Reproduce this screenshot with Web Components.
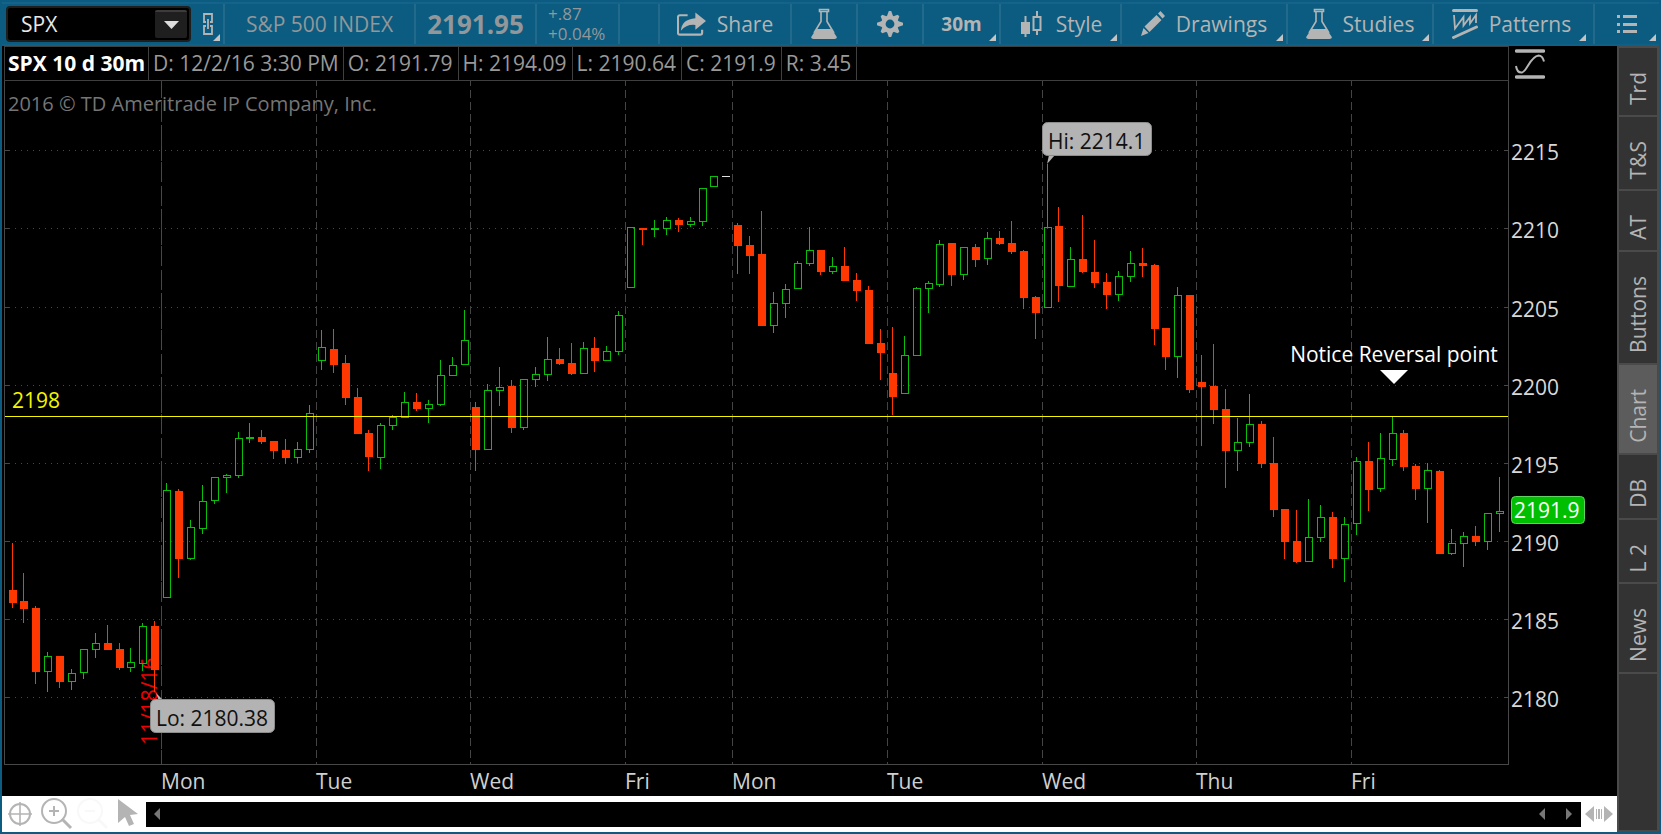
<!DOCTYPE html>
<html lang="en">
<head>
<meta charset="utf-8">
<title>SPX Chart</title>
<style>
  html, body { margin: 0; height: 100%; background: #0b5c80; }
  body { font: 21px/28px "Open Sans", "Noto Sans", sans-serif; color: #b4b4b4; }
</style>
</head>
<body>
<trade-window></trade-window>

<script>
const make = (name, html, setup) => {
  const tpl = document.createElement('template');
  tpl.innerHTML = html;
  customElements.define(name, class extends HTMLElement {
    constructor() {
      super();
      this.attachShadow({ mode: 'open' }).append(tpl.content.cloneNode(true));
    }
    connectedCallback() { if (setup) setup(this, this.shadowRoot); }
  });
};

/* ---------- icons ---------- */
const flask = `<svg width="26" height="32" viewBox="0 0 26 32"><path d="M8.5 1.5h9v2h-9zM10 3.5v10L3 25M16 3.500v10L23 25" fill="none" stroke="#b4b4b4" stroke-width="1.6"/><path d="M5.500 21h15l5 7.500q1 2.500-2 2.500h-21q-3 0-2-2.500z" fill="#b4b4b4"/></svg>`;
const ICONS = {
  flask,
  share: `<svg width="29" height="26" viewBox="0 0 30 26"><path d="M11 4H3q-2 0-2 2v16q0 2 2 2h21q2 0 2-2v-3" fill="none" stroke="#b4b4b4" stroke-width="2.2"/><path d="M19 1l11 9-11 9v-5q-9-1-15 6 1-12 15-13z" fill="#b4b4b4"/></svg>`,
  gear: `<svg width="28" height="28" viewBox="-14 -14 28 28"><g fill="#b4b4b4"><g><path d="M-3-8L-1.200-13h2.400L3-8zM-3 8L-1.200 13h2.400L3 8z"/><path d="M-8-3L-13-1.200v2.400L-8 3zM8-3L13-1.200v2.400L8 3z"/></g><g transform="rotate(45)"><path d="M-3-8L-1.200-12h2.400L3-8zM-3 8L-1.200 12h2.400L3 8z"/><path d="M-8-3L-12-1.200v2.400L-8 3zM8-3L12-1.200v2.400L8 3z"/></g></g><circle r="6.600" fill="none" stroke="#b4b4b4" stroke-width="4.400"/></svg>`,
  candles: `<svg width="26" height="28" viewBox="-1 0 26 28"><path d="M1 12h9v12H1zM4.500 6h2v21h-2z" fill="#b4b4b4"/><path d="M13.500 7h7v13h-7zM17 1v6M17 20v5" fill="none" stroke="#b4b4b4" stroke-width="2"/></svg>`,
  pencil: `<svg width="24" height="26" viewBox="0 0 24 26"><path d="M0 25l2.500-8 5 5zM3.500 15.500L15.500 4l5 5L8.500 21zM17 2.500L19.500 0 24 5l-2.500 2.500z" fill="#b4b4b4"/></svg>`,
  patterns: `<svg width="26" height="32" viewBox="0 0 26 32"><path d="M1.500 2.500h23M1.500 29.500l23-10.500" stroke="#b4b4b4" stroke-width="3" stroke-linecap="round"/><path d="M2 7l1 13.500L11.500 9v8.500L18 9v6.500L24 7v8" fill="none" stroke="#b4b4b4" stroke-width="1.800"/></svg>`,
  list: `<svg width="20" height="20" viewBox="0 0 20 20"><path d="M0 1h3v3H0zM0 9h3v3H0zM0 16h3v3H0zM6 1h14v3H6zM6 9h14v3H6zM6 16h14v3H6z" fill="#b4b4b4"/></svg>`
};

/* ---------- one toolbar cell ---------- */
make('tool-item', `
<style>
  :host { display: flex; box-sizing: border-box; border-left: 2px solid #226a8b; position: relative; flex: none; }
  button { flex: 1; display: flex; align-items: center; justify-content: center; gap: 11px; border: 0; padding: 0;
    background: none; color: inherit; font: inherit; white-space: nowrap; }
  svg { display: block; flex: none; }
  .corner { position: absolute; right: 3px; bottom: 3px; display: none; }
  :host([menu]) .corner { display: block; }
</style>
<button type="button"><span class="icon"></span><slot></slot></button>
<svg class="corner" width="7" height="7" aria-hidden="true"><path d="M7 0v7H0z" fill="#c4c4c4"/></svg>`,
(host, root) => {
  const box = root.querySelector('.icon'), name = host.getAttribute('icon');
  if (name) box.innerHTML = ICONS[name]; else box.remove();
  const label = host.getAttribute('label');
  if (label) root.querySelector('button').setAttribute('aria-label', label);
});

make('tool-bar', `
<style>
  :host { display: flex; height: 40px; border-top: 2px solid #13638a; border-bottom: 2px solid #0f6086; margin-top: 2px; }
  .symbol { display: flex; align-items: center; width: 221px; box-sizing: border-box; padding-left: 4px; position: relative; flex: none; }
  .combo { display: flex; align-items: center; width: 185px; height: 36px; box-sizing: border-box; border: 2px solid #1e1e1e; border-radius: 4px; background: #000; }
  input { flex: 1; min-width: 0; border: 0; padding: 0 0 0 13px; background: none; color: #e8e8e8; font: inherit; outline: 0; }
  .drop { width: 32px; height: 28px; margin-right: 2px; border: 0; border-top: 2px solid #3c3c3c; border-radius: 2px; padding: 0; background: #1f1f1f; display: grid; place-items: center; }
  .link { border: 0; padding: 0; margin-left: 12px; background: none; display: flex; }
  .corner { position: absolute; right: 3px; bottom: 3px; }
  .info { display: flex; align-items: center; justify-content: center; box-sizing: border-box; border-left: 2px solid #226a8b; color: #939799; flex: none; white-space: nowrap; }
  .last { font-weight: 700; font-size: 26px; }
  .chg { font-size: 17px; line-height: 20px; flex-direction: column; align-items: flex-start; padding-left: 11px; }
  .gap { flex: 1; border-left: 2px solid #226a8b; }
  .tf { font-weight: 700; font-size: 19px; }
</style>
<div class="symbol">
  <div class="combo"><input aria-label="Symbol" value="SPX"><button class="drop" type="button" aria-label="Choose symbol"><svg width="15" height="8"><path d="M0 0h15L7.500 8z" fill="#ddd"/></svg></button></div>
  <button class="link" type="button" aria-label="Link symbol"><svg width="10" height="22" viewBox="0 0 10 22" fill="none" stroke="#b4b4b4" stroke-width="1.800"><path d="M3 9H1V1h8v8H7M3 13H1v8h8v-8H7M5 6v10" /></svg></button>
  <svg class="corner" width="7" height="7"><path d="M7 0v7H0z" fill="#c4c4c4"/></svg>
</div>
<div class="info" style="width:191px">S&amp;P 500 INDEX</div>
<div class="info last" style="width:121px">2191.95</div>
<div class="info chg" style="width:83px"><div>+.87</div><div>+0.04%</div></div>
<div class="gap"></div>
<tool-item icon="share" style="width:132px">Share</tool-item>
<tool-item icon="flask" label="Lab" style="width:66px"></tool-item>
<tool-item icon="gear" label="Settings" style="width:66px"></tool-item>
<tool-item class="tf" menu style="width:77px">30m</tool-item>
<tool-item icon="candles" menu style="width:121px">Style</tool-item>
<tool-item icon="pencil" menu style="width:166px">Drawings</tool-item>
<tool-item icon="flask" menu style="width:146px">Studies</tool-item>
<tool-item icon="patterns" menu style="width:157px;margin-right:4px">Patterns</tool-item>
<tool-item icon="list" label="Menu" menu style="width:66px"></tool-item>`);

/* ---------- bar readout above the plot ---------- */
make('chart-readout', `
<style>
  :host { display: flex; height: 35px; }
  .strip { flex: 1; display: flex; margin-left: 2px; border: 1px solid #3f3f3f; white-space: nowrap; color: #999; overflow: hidden; }
  .strip > div { border-right: 1px solid #3f3f3f; padding: 0 5px 0 4px; line-height: 33px; }
  .strip > .name { padding: 0 3px; color: #fff; font-weight: 700; }
  .strip > .date { padding: 0 4px; }
  .side { width: 108px; flex: none; }
  button { border: 0; padding: 3px 0 0 6px; background: none; display: block; }
  svg { display: block; }
</style>
<div class="strip"><div class="name">SPX 10 d 30m</div><div class="date">D: 12/2/16 3:30 PM</div><div>O: 2191.79</div><div>H: 2194.09</div><div>L: 2190.64</div><div>C: 2191.9</div><div>R: 3.45</div></div>
<div class="side"><button type="button" aria-label="Price scale"><svg width="30" height="30" viewBox="0 0 30 30"><path d="M1.500 2h27M1.500 28h27" stroke="#b4b4b4" stroke-width="3.400" stroke-linecap="round"/><path d="M1 17q1 7 6 6.500c5-1 8-16 16.500-17q4 0 5.500 6" fill="none" stroke="#b4b4b4" stroke-width="2"/></svg></button></div>`);

/* ---------- candles: x, direction, high, body top, body bottom, low ---------- */
const CANDLES = `
9r543,590,603,608 20r573,601,609,623 32r606,608,672,684 44g652,656,672,692 56r656,656,682,688 68g669,673,682,690
80g649,649,673,679 92g633,643,650,658 104r625,643,650,650 116r643,649,668,670 127g648,662,668,672 139g623,626,664,671 151r621,626,670,692
163g483,490,598,598 175r489,491,559,578 187g520,527,559,560 199g485,501,529,534 211g477,477,501,504 223g474,475,478,493
235g432,438,476,478 246g423,437,439,443 258r430,437,442,444 270r441,441,451,459 282r439,450,458,464 294g442,449,458,463 306g405,413,450,453
318g330,347,361,370 330r329,349,365,373 342r355,363,398,405 354r388,397,434,434 365r430,433,457,471 377g423,425,458,469
389g415,417,426,430 401g392,402,418,418 413r393,402,409,411 425g400,404,409,423 437g360,375,405,406 449g357,365,376,376 461g310,340,365,365
472r402,407,450,471 484g384,390,450,450 496g367,387,391,406 508r380,386,428,433 520g379,379,428,430 532g367,374,380,387
544g337,359,375,381 556r348,359,364,365 568r343,363,374,375 580g342,348,374,374 591r337,348,361,372 603g346,351,361,361 615g311,315,352,355
627g227,227,288,288 639r228,228,230,245 651g220,228,230,237 663g217,220,229,235 675r218,220,225,232 687g217,221,225,227
699g188,188,222,226 710g176,176,187,187 722w176,176,177,177
734r223,225,246,274 746r236,245,256,274 758r211,254,326,326 770g292,303,326,333 782g284,289,304,318 794g261,263,289,289
806g227,250,264,266 817r250,250,272,275 829g257,266,272,274 841r247,266,281,281 853r273,280,291,301 865r286,290,344,344 877r329,343,353,380
889r327,373,397,415 901g336,355,394,394 913g287,288,356,356 925g281,283,289,313 936g240,244,285,287 948r243,243,275,286
960g247,247,275,280 972r244,247,260,267 984g232,238,259,265 996r231,238,244,245 1008r221,243,252,254 1020r250,251,298,309 1032r296,297,313,339
1044g164,227,308,308 1055r207,226,286,302 1067g247,259,287,287 1079r215,259,272,273 1091r240,272,283,288 1103r273,282,295,309
1115g271,276,295,301 1127g251,263,277,282 1139r248,263,266,277 1151r264,265,329,345 1162r328,328,357,370 1174g287,295,357,378 1186r295,295,390,393
1198r355,382,387,446 1210r344,386,410,424 1222r389,409,451,488 1234g418,442,451,471 1246g394,424,443,447 1258r421,424,464,468
1270r437,463,510,517 1281r509,509,542,559 1293r510,541,562,563 1305g499,537,562,562 1317g505,517,538,542 1329r512,517,559,568 1341g517,524,559,582
1353g457,461,524,535 1365r442,461,490,511 1377g433,458,489,492 1389g417,433,460,466 1400r430,433,467,471 1412r464,466,489,500
1424g463,470,489,523 1436r470,471,554,554 1448g529,543,554,555 1460g532,536,544,567 1472r526,536,542,546 1484g513,513,542,550 1496g477,511,514,532`
  .trim().split(/\s+/).map(s => { const m = s.match(/^(\d+)([rgw])(.+)$/); return [+m[1], m[2], ...m[3].split(',').map(Number)]; });
const LEVELS = [[150, 2215], [228, 2210], [307, 2205], [385, 2200], [463, 2195], [541, 2190], [619, 2185], [697, 2180]];
const DAYS = [[161, 'Mon'], [316, 'Tue'], [470, 'Wed'], [625, 'Fri'], [732, 'Mon'], [887, 'Tue'], [1042, 'Wed'], [1196, 'Thu'], [1351, 'Fri']];
const COLOR = { r: '#ff3700', g: '#0abf0a', w: '#e0e0e0' };

make('price-chart', `
<style>
  :host { display: block; position: relative; min-height: 0; overflow: hidden; }
  svg { display: block; width: 100%; height: 100%; }
  text { font: 21px "Open Sans", "Noto Sans", sans-serif; white-space: pre; }
  .small { font-size: 20px; }
</style>
<svg role="img" aria-label="SPX 30 minute candles"></svg>`,
(host, root) => {
  const svg = root.querySelector('svg');
  const draw = () => {
    const w = host.clientWidth, h = host.clientHeight;
    if (!w || !h) return;
    const kx = (w - 110) / 1505, ky = (h - 31) / 684;
    const X = v => Math.round(2 + (v - 4) * kx), Y = v => Math.round((v - 81) * ky);
    const right = X(1508), bottom = Y(764);
    const box = (x, y, bw, bh, f) => `<rect x="${x}" y="${y}" width="${bw}" height="${bh}" fill="${f}"/>`;
    const text = (x, y, s, f, more = '') => `<text x="${x}" y="${y}" fill="${f}" ${more}>${s}</text>`;
    let o = '';
    for (const [y, v] of LEVELS) {
      const yy = Y(y);
      o += `<path d="M${X(15)} ${yy}.5H${right - 5}" stroke="#484848" stroke-dasharray="1 5"/>`;
      o += box(3, yy, 5, 1, '#484848') + box(right - 4, yy, 4, 1, '#484848');
      o += text(right + 3, yy + 10, v, '#d8d8d8');
    }
    for (const [x, v] of DAYS) {
      o += `<path d="M${X(x)}.5 0V${bottom}" stroke="#444" stroke-dasharray="8 4" stroke-dashoffset="3"/>`;
      o += text(X(x), bottom + 25, v, '#d0d0d0');
    }
    o += `<path d="M${X(161)}.5 0V${bottom}" stroke="#f00000" stroke-dasharray="15 6" stroke-dashoffset="-2"/>`;
    o += box(2, 0, 1, bottom + 1, '#484848') + box(right, 0, 1, bottom + 1, '#484848') + box(2, bottom, right - 1, 1, '#484848');
    o += text(6, 30, '2016 © TD Ameritrade IP Company, Inc.', '#757575', 'class="small"');
    o += text(0, 0, '11/18/16', '#f00000', `transform="translate(${X(157)} ${Y(745)}) rotate(-90)"`);
    for (const [x, d, hi, top, bot, lo] of CANDLES) {
      const c = COLOR[d], l = X(x), t = Y(top), b = Y(bot);
      o += box(l + 3, Y(hi), 1, t - Y(hi), c) + box(l + 3, b, 1, Y(lo) - b, c);
      o += d === 'g' && b - t > 2
        ? `<rect x="${l}.5" y="${t}.5" width="7" height="${b - t - 1}" fill="none" stroke="${c}"/>`
        : box(l, t, 8, b - t, c);
    }
    o += box(3, Y(416), right - 3, 1, '#f5f500');
    o += text(10, Y(416) - 8, '2198', '#f5f500');
    const note = (x, y, bw, tail, s) => `<path d="${tail}" fill="#b3b3b3"/><rect x="${x}.5" y="${y}.5" width="${bw}" height="33" rx="5" fill="#b3b3b3" stroke="#8c8c8c"/>` + text(x + 6, y + 27, s, '#101010');
    const lx = X(150), ly = Y(699), hx = X(1042), hy = Y(122);
    o += note(lx, ly, 124, `M${lx + 6} ${ly - 6}l8 8h-5z`, 'Lo: 2180.38');
    o += note(hx, hy, 109, `M${hx + 5} ${hy + 42}l8-9h-6z`, 'Hi: 2214.1');
    const nx = X(1394), ny = Y(370);
    o += text(nx, ny - 8, 'Notice Reversal point', '#fff', 'text-anchor="middle"');
    o += `<path d="M${nx - 14} ${ny}h28l-14 14z" fill="#fff"/>`;
    const py = Y(496);
    o += `<rect x="${right + 3}.5" y="${py}.5" width="73" height="27" rx="4" fill="#00bf00" stroke="#5fd35f"/>` + text(right + 6, py + 22, '2191.9', '#fff');
    svg.innerHTML = o;
  };
  draw();
  new ResizeObserver(draw).observe(host);
});

/* ---------- bottom bar ---------- */
make('chart-scroll', `
<style>
  :host { display: flex; align-items: center; height: 36px; background: #fff; }
  button { border: 0; padding: 0; background: none; display: block; }
  svg { display: block; }
  .tools { display: flex; width: 144px; flex: none; }
  .track { flex: 1; display: flex; align-items: center; height: 25px; background: #000; }
  .back { margin: 0 auto 0 8px; }
  .fwd { margin: 0 9px 0 21px; }
  .size { width: 36px; flex: none; padding-left: 4px; box-sizing: border-box; }
</style>
<div class="tools">
  <button type="button" aria-label="Crosshair"><svg width="36" height="36" fill="none" stroke="#b4b4b4" stroke-width="2"><circle cx="18" cy="18" r="10"/><path d="M6 18h24M18 6v24" stroke-width="1.600"/></svg></button>
  <button type="button" aria-label="Zoom in"><svg width="36" height="36" fill="none" stroke="#b4b4b4" stroke-width="2"><circle cx="16" cy="15" r="12"/><path d="M11 15h10M16 10v10"/><path d="M24 23l9 9" stroke-width="3"/></svg></button>
  <button type="button" aria-label="Zoom out"><svg width="36" height="36" fill="none" stroke="#f8f8f8" stroke-width="2"><circle cx="16" cy="15" r="12"/><path d="M11 15h10"/><path d="M24 23l9 9" stroke-width="3"/></svg></button>
  <button type="button" aria-label="Pointer"><svg width="32" height="36"><path d="M8 3l20 15-8 1 4 9-5 2-4-9-7 6z" fill="#b4b4b4"/></svg></button>
</div>
<div class="track">
  <button class="back" type="button" aria-label="Scroll to start"><svg width="6" height="12"><path d="M6 0v12L0 6z" fill="#777"/></svg></button>
  <button type="button" aria-label="Scroll left"><svg width="6" height="12"><path d="M6 0v12L0 6z" fill="#777"/></svg></button>
  <button class="fwd" type="button" aria-label="Scroll right"><svg width="6" height="12"><path d="M0 0v12l6-6z" fill="#777"/></svg></button>
</div>
<button class="size" type="button" aria-label="Resize"><svg width="28" height="16" fill="#b4b4b4"><path d="M9 0v16L0 8zM19 0v16l9-8zM11 3h1v10h-1zM13 3h2v10h-2zM16 3h1v10h-1z"/></svg></button>`);

/* ---------- side tabs ---------- */
make('side-tab', `
<style>
  :host { display: block; background: #333; }
  :host([current]) { background: #5c5c5c; }
  button { display: flex; width: 100%; border: 0; padding: 24px 0 10px; background: none; color: inherit; font: inherit; justify-content: center; }
  span { writing-mode: vertical-rl; transform: rotate(180deg); line-height: 38px; white-space: nowrap; }
</style>
<button type="button"><span><slot></slot></span></button>`);

make('side-tabs', `
<style>
  :host { display: flex; flex-direction: column; gap: 2px; box-sizing: border-box; width: 42px; padding: 2px; background: #4a4a4a; }
  .rest { flex: 1; background: #333; }
</style>
<side-tab>Trd</side-tab><side-tab>T&amp;S</side-tab><side-tab>AT</side-tab><side-tab>Buttons</side-tab><side-tab current>Chart</side-tab><side-tab>DB</side-tab><side-tab>L 2</side-tab><side-tab>News</side-tab><div class="rest"></div>`);

make('trade-window', `
<style>
  :host { display: flex; flex-direction: column; box-sizing: border-box; height: 100vh; padding: 0 2px 2px; background: #0b5c80; }
  .work { flex: 1; display: flex; min-height: 0; }
  main { flex: 1; min-width: 0; display: flex; flex-direction: column; background: #000; }
  price-chart { flex: 1; }
</style>
<tool-bar></tool-bar>
<div class="work">
  <main><chart-readout></chart-readout><price-chart></price-chart><chart-scroll></chart-scroll></main>
  <side-tabs></side-tabs>
</div>`);
</script>
</body>
</html>
